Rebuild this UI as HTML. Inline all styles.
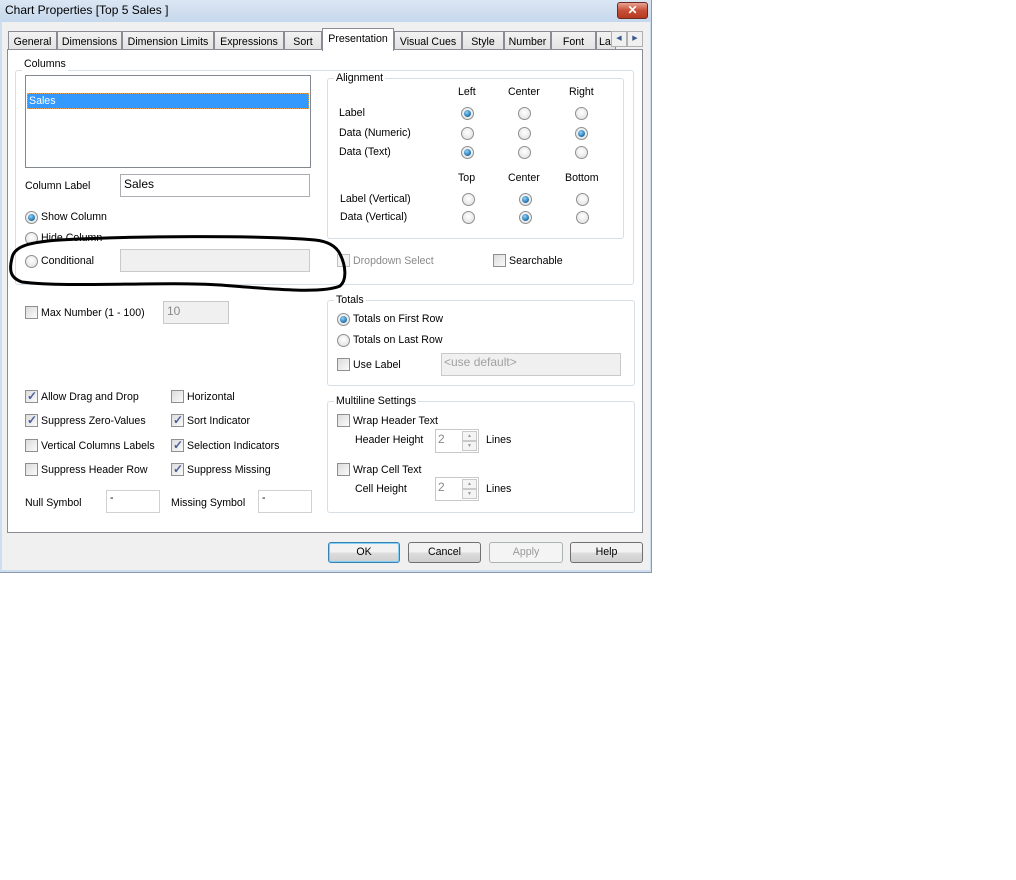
<!DOCTYPE html>
<html><head><meta charset="utf-8"><style>
*{margin:0;padding:0;box-sizing:border-box}
body{width:1016px;height:880px;background:#fff;position:relative;overflow:hidden;font-family:"Liberation Sans",sans-serif;font-size:10.6px;color:#000}
.a{position:absolute}
.t{position:absolute;white-space:nowrap;line-height:13px;font-size:10.6px}
.r{position:absolute;width:13px;height:13px;border-radius:50%;border:1px solid #8f8f8f;background:radial-gradient(circle at 50% 40%,#fff,#dcdcdc)}
.r.on::after{content:"";position:absolute;left:2px;top:2px;width:7px;height:7px;border-radius:50%;background:radial-gradient(circle at 40% 35%,#8fd3ff,#1d6fa8 70%,#0c4a78)}
.c{position:absolute;width:13px;height:13px;border:1px solid #8f8f8f;background:linear-gradient(135deg,#dcdcdc,#fafafa)}
.c.on::after{content:"✓";position:absolute;left:1px;top:-2px;font-size:12px;font-weight:bold;color:#4a5f97}
.g{position:absolute;border:1px solid #d5dfe5;border-radius:3px}
.gl{position:absolute;background:#fff;padding:0 2px;white-space:nowrap;line-height:13px}
.in{position:absolute;border:1px solid #abadb3;background:#fff}
.dis{background:#f0f0f0;border-color:#c9c9c9}
.tab{position:absolute;top:31px;height:19px;border:1px solid #898c95;border-bottom:none;background:linear-gradient(#f2f2f2,#e2e2e2);text-align:center;line-height:20px;font-size:10.6px}
.btn{position:absolute;top:542px;height:21px;border:1px solid #707070;border-radius:3px;background:linear-gradient(#f2f2f2 50%,#dddddd 50%,#cfcfcf);text-align:center;line-height:19px;font-size:10.6px}
</style></head><body>
<div class="a" style="left:0;top:0;width:652px;height:573px;background:#cfdeee;border-right:1px solid #8a9bb0;border-bottom:1px solid #8a9bb0"></div>
<div class="a" style="left:0;top:0;width:651px;height:22px;background:linear-gradient(#dbe6f3,#c6d8ec)"></div>
<div class="t" style="left:5px;top:4px;font-size:12px">Chart Properties [Top 5 Sales ]</div>
<div class="a" style="left:617px;top:2px;width:31px;height:17px;border:1px solid #6d2a22;border-radius:3px;background:linear-gradient(#e8a493,#c74f37 50%,#b63a22);color:#fff;text-align:center;font-weight:bold;font-size:12px;line-height:15px">✕</div>
<div class="a" style="left:2px;top:22px;width:648px;height:548px;background:#f0f0f0"></div>
<div class="tab" style="left:8px;width:49px">General</div>
<div class="tab" style="left:57px;width:65px">Dimensions</div>
<div class="tab" style="left:122px;width:92px">Dimension Limits</div>
<div class="tab" style="left:214px;width:70px">Expressions</div>
<div class="tab" style="left:284px;width:38px">Sort</div>
<div class="tab" style="left:394px;width:68px">Visual Cues</div>
<div class="tab" style="left:462px;width:42px">Style</div>
<div class="tab" style="left:504px;width:47px">Number</div>
<div class="tab" style="left:551px;width:45px">Font</div>
<div class="tab" style="left:596px;width:20px;text-align:left;padding-left:2px;overflow:hidden">La</div>
<div class="a" style="left:611px;top:31px;width:16px;height:16px;border:1px solid #b0b0b0;background:#f0f0f0;font-size:7px;text-align:center;line-height:14px;color:#3a5a8a">◀</div>
<div class="a" style="left:627px;top:31px;width:16px;height:16px;border:1px solid #b0b0b0;background:#f0f0f0;font-size:7px;text-align:center;line-height:14px;color:#3a5a8a">▶</div>
<div class="a" style="left:7px;top:49px;width:636px;height:484px;background:#fff;border:1px solid #898c95"></div>
<div class="tab" style="left:322px;top:28px;width:72px;height:23px;background:#fff;line-height:21px">Presentation</div>

<div class="g" style="left:15px;top:70px;width:619px;height:215px"></div>
<div class="gl" style="left:22px;top:58px">Columns</div>
<div class="in" style="left:25px;top:75px;width:286px;height:93px;border-color:#828790"></div>
<div class="a" style="left:27px;top:93px;width:282px;height:16px;background:#3399ff;border:1px dotted #e0a050"></div>
<div class="t" style="left:29px;top:95px;color:#fff">Sales</div>
<div class="t" style="left:25px;top:180px">Column Label</div>
<div class="in" style="left:120px;top:174px;width:190px;height:23px"></div>
<div class="t" style="left:124px;top:178px;font-size:12px">Sales</div>
<div class="r on" style="left:25px;top:211px"></div><div class="t" style="left:41px;top:211px">Show Column</div>
<div class="r" style="left:25px;top:232px"></div><div class="t" style="left:41px;top:232px">Hide Column</div>
<div class="r" style="left:25px;top:255px"></div><div class="t" style="left:41px;top:255px">Conditional</div>
<div class="in dis" style="left:120px;top:249px;width:190px;height:23px"></div>
<div class="c" style="left:337px;top:254px;border-color:#c0c0c0;background:#f4f4f4"></div><div class="t" style="left:353px;top:255px;color:#8a8a8a">Dropdown Select</div>
<div class="c" style="left:493px;top:254px"></div><div class="t" style="left:509px;top:255px">Searchable</div>

<div class="g" style="left:327px;top:78px;width:297px;height:161px"></div>
<div class="gl" style="left:334px;top:72px">Alignment</div>
<div class="t" style="left:458px;top:86px">Left</div><div class="t" style="left:508px;top:86px">Center</div><div class="t" style="left:569px;top:86px">Right</div>
<div class="t" style="left:339px;top:107px">Label</div>
<div class="t" style="left:339px;top:127px">Data (Numeric)</div>
<div class="t" style="left:339px;top:146px">Data (Text)</div>
<div class="r on" style="left:461px;top:107px"></div><div class="r" style="left:518px;top:107px"></div><div class="r" style="left:575px;top:107px"></div>
<div class="r" style="left:461px;top:127px"></div><div class="r" style="left:518px;top:127px"></div><div class="r on" style="left:575px;top:127px"></div>
<div class="r on" style="left:461px;top:146px"></div><div class="r" style="left:518px;top:146px"></div><div class="r" style="left:575px;top:146px"></div>
<div class="t" style="left:458px;top:172px">Top</div><div class="t" style="left:508px;top:172px">Center</div><div class="t" style="left:565px;top:172px">Bottom</div>
<div class="t" style="left:340px;top:193px">Label (Vertical)</div>
<div class="t" style="left:340px;top:211px">Data (Vertical)</div>
<div class="r" style="left:462px;top:193px"></div><div class="r on" style="left:519px;top:193px"></div><div class="r" style="left:576px;top:193px"></div>
<div class="r" style="left:462px;top:211px"></div><div class="r on" style="left:519px;top:211px"></div><div class="r" style="left:576px;top:211px"></div>

<div class="c" style="left:25px;top:306px"></div><div class="t" style="left:41px;top:307px">Max Number (1 - 100)</div>
<div class="in dis" style="left:163px;top:301px;width:66px;height:23px"></div>
<div class="t" style="left:167px;top:305px;color:#8a8a8a;font-size:12px">10</div>

<div class="g" style="left:327px;top:300px;width:308px;height:86px"></div>
<div class="gl" style="left:334px;top:294px">Totals</div>
<div class="r on" style="left:337px;top:313px"></div><div class="t" style="left:353px;top:313px">Totals on First Row</div>
<div class="r" style="left:337px;top:334px"></div><div class="t" style="left:353px;top:334px">Totals on Last Row</div>
<div class="c" style="left:337px;top:358px"></div><div class="t" style="left:353px;top:359px">Use Label</div>
<div class="in dis" style="left:441px;top:353px;width:180px;height:23px"></div>
<div class="t" style="left:444px;top:356px;color:#a0a0a0;font-size:12px">&lt;use default&gt;</div>

<div class="c on" style="left:25px;top:390px"></div><div class="t" style="left:41px;top:391px">Allow Drag and Drop</div>
<div class="c on" style="left:25px;top:414px"></div><div class="t" style="left:41px;top:415px">Suppress Zero-Values</div>
<div class="c" style="left:25px;top:439px"></div><div class="t" style="left:41px;top:440px">Vertical Columns Labels</div>
<div class="c" style="left:25px;top:463px"></div><div class="t" style="left:41px;top:464px">Suppress Header Row</div>
<div class="c" style="left:171px;top:390px"></div><div class="t" style="left:187px;top:391px">Horizontal</div>
<div class="c on" style="left:171px;top:414px"></div><div class="t" style="left:187px;top:415px">Sort Indicator</div>
<div class="c on" style="left:171px;top:439px"></div><div class="t" style="left:187px;top:440px">Selection Indicators</div>
<div class="c on" style="left:171px;top:463px"></div><div class="t" style="left:187px;top:464px">Suppress Missing</div>
<div class="t" style="left:25px;top:497px">Null Symbol</div>
<div class="in" style="left:106px;top:490px;width:54px;height:23px;border-color:#d0d0d0"></div><div class="t" style="left:110px;top:492px">-</div>
<div class="t" style="left:171px;top:497px">Missing Symbol</div>
<div class="in" style="left:258px;top:490px;width:54px;height:23px;border-color:#d0d0d0"></div><div class="t" style="left:262px;top:492px">-</div>

<div class="g" style="left:327px;top:401px;width:308px;height:112px"></div>
<div class="gl" style="left:334px;top:395px">Multiline Settings</div>
<div class="c" style="left:337px;top:414px"></div><div class="t" style="left:353px;top:415px">Wrap Header Text</div>
<div class="t" style="left:355px;top:434px">Header Height</div>
<div class="in" style="left:435px;top:429px;width:44px;height:24px;border-color:#c9c9c9"></div><div class="t" style="left:438px;top:433px;color:#8a8a8a;font-size:12px">2</div>
<div class="a" style="left:462px;top:431px;width:15px;height:10px;border:1px solid #c9c9c9;background:#f4f4f4;font-size:5px;text-align:center;line-height:8px;color:#999">▲</div>
<div class="a" style="left:462px;top:441px;width:15px;height:10px;border:1px solid #c9c9c9;background:#f4f4f4;font-size:5px;text-align:center;line-height:8px;color:#999">▼</div>
<div class="t" style="left:486px;top:434px">Lines</div>
<div class="c" style="left:337px;top:463px"></div><div class="t" style="left:353px;top:464px">Wrap Cell Text</div>
<div class="t" style="left:355px;top:483px">Cell Height</div>
<div class="in" style="left:435px;top:477px;width:44px;height:24px;border-color:#c9c9c9"></div><div class="t" style="left:438px;top:481px;color:#8a8a8a;font-size:12px">2</div>
<div class="a" style="left:462px;top:479px;width:15px;height:10px;border:1px solid #c9c9c9;background:#f4f4f4;font-size:5px;text-align:center;line-height:8px;color:#999">▲</div>
<div class="a" style="left:462px;top:489px;width:15px;height:10px;border:1px solid #c9c9c9;background:#f4f4f4;font-size:5px;text-align:center;line-height:8px;color:#999">▼</div>
<div class="t" style="left:486px;top:483px">Lines</div>

<div class="btn" style="left:328px;width:72px;border-color:#3c7fb1;box-shadow:inset 0 0 0 1px #7fd0f5">OK</div>
<div class="btn" style="left:408px;width:73px">Cancel</div>
<div class="btn" style="left:489px;width:74px;border-color:#adb2b5;background:#f4f4f4;color:#9a9a9a">Apply</div>
<div class="btn" style="left:570px;width:73px">Help</div>

<svg class="a" style="left:0;top:0" width="652" height="573">
<path d="M315,240 C260,235 130,236 60,240 C30,242 14,246 12,258 C9,270 10,278 22,282 C70,288 160,281 220,285 C270,289 322,294 340,286 C347,280 346,266 340,254 C335,244 325,241 315,240" fill="none" stroke="#000" stroke-width="3" stroke-linecap="round"/>
</svg>
</body></html>
